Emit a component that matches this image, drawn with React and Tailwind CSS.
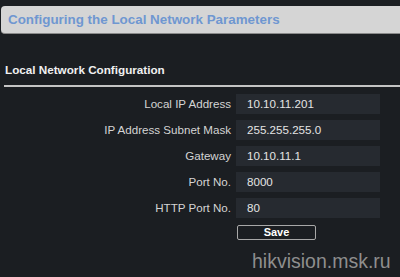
import React from "react";

const rows = [
  ["Local IP Address", "10.10.11.201"],
  ["IP Address Subnet Mask", "255.255.255.0"],
  ["Gateway", "10.10.11.1"],
  ["Port No.", "8000"],
  ["HTTP Port No.", "80"],
];

export default function App() {
  return (
    <div
      className="relative w-[400px] h-[277px] overflow-hidden bg-[#1b1e22] pt-[6px]"
      style={{ fontFamily: '"Liberation Sans", Arial, sans-serif' }}
    >
      <div className="ml-[1px] mr-[-6px] h-[28px] rounded-[4px] bg-[#d5d5d5] border-b border-[#8a8a8a] flex items-center pl-[7px]">
        <span className="text-[13.4px] font-bold text-[#6f97d1] leading-none">
          Configuring the Local Network Parameters
        </span>
      </div>
      <div className="mt-[29px] pl-[5px] text-[11.7px] font-bold text-[#f0f0f0] leading-[14px]">
        Local Network Configuration
      </div>
      <div className="mt-[8px] ml-[4px] h-[2px] bg-[#c4c4c4]" />
      <div className="mt-[7px] flex flex-col gap-[6px]">
        {rows.map(([label, value]) => (
          <div key={label} className="flex items-center">
            <div className="w-[231px] text-right text-[11.6px] text-[#d4d4d4] leading-none">
              {label}
            </div>
            <div className="ml-[5px] w-[144px] h-[20px] bg-[#262a30] flex items-center pl-[11px] text-[11.6px] text-[#e4e4e4] leading-none">
              {value}
            </div>
          </div>
        ))}
      </div>
      <div className="mt-[7px] ml-[237px] w-[79px] h-[15px] border border-[#a8a8a8] rounded-[2px] flex items-center justify-center text-[11px] font-bold text-white leading-none">
        Save
      </div>
      <div className="absolute top-[251px] left-[252px] text-[19.5px] leading-[20px] text-[#8e8e8e]">
        hikvision.msk.ru
      </div>
    </div>
  );
}
